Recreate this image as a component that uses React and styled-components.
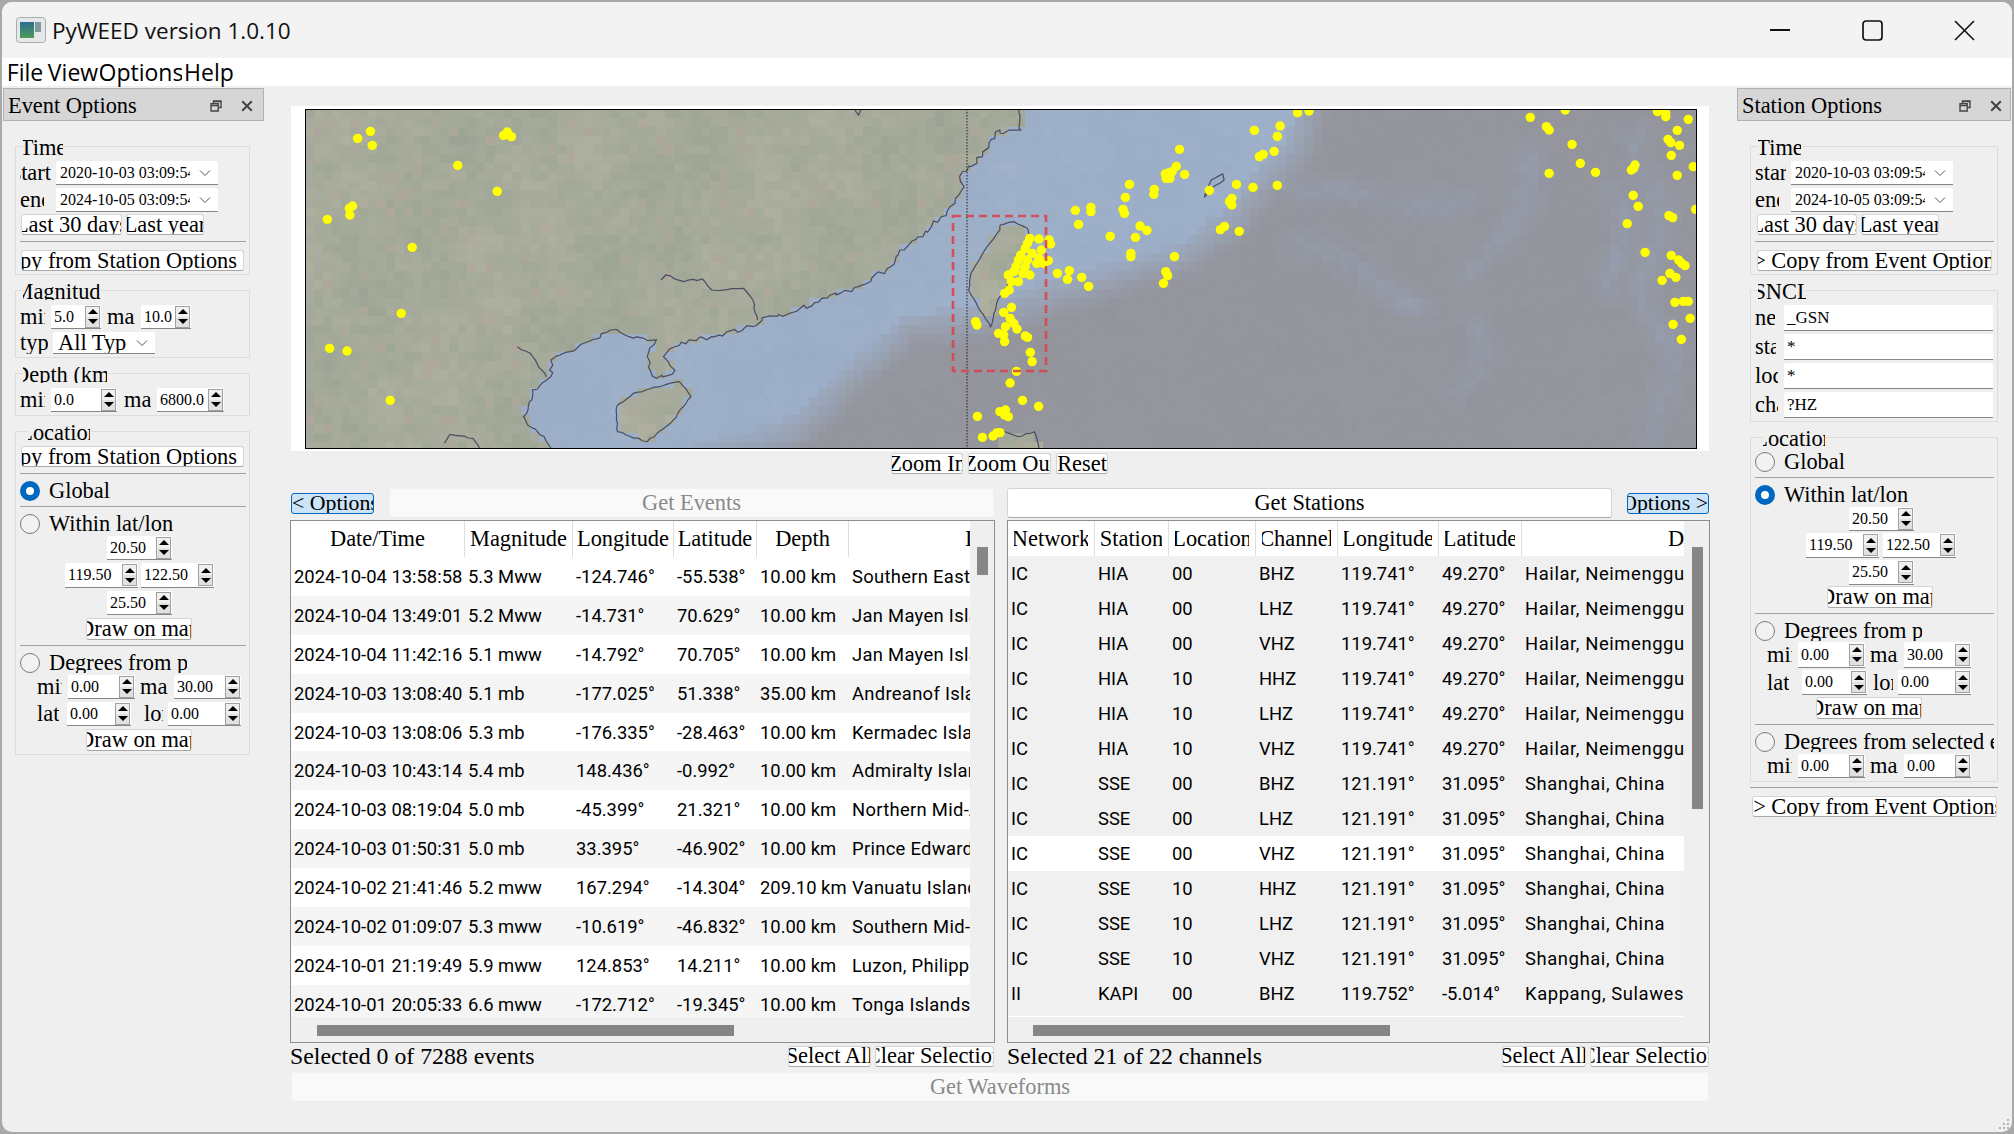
import React from "react";
import styled, { createGlobalStyle } from "styled-components";

const GlobalStyle = createGlobalStyle`
  html, body { margin: 0; padding: 0; background: #a9a9a9; }
  * { box-sizing: border-box; }
`;

const serif = `"Liberation Serif", serif`;
const sans = `"Open Sans", sans-serif`;

/* ---------- map drawing data ---------- */

const MAP_W = 1392;
const MAP_H = 340;
const z7 = ([x, y]) => [x / 2.178 - 25, y / 3 - 9];
const z8 = ([x, y]) => [x / 2.178 + 695, y / 3 - 9];

const mainCoast = [
  ...[[45, 0], [45, 90], [20, 90], [0, 100]].map(z8),
  ...[[1568, 90], [1530, 170], [1480, 230], [1490, 260], [1470, 310], [1440, 350], [1400, 410], [1350, 450], [1330, 500], [1260, 560], [1180, 595], [1110, 640], [1060, 650], [1030, 680], [940, 710], [860, 740], [835, 770], [860, 810], [820, 835], [800, 770], [820, 720], [760, 710], [720, 690], [650, 740], [590, 780], [590, 830], [550, 870], [530, 950], [590, 1045]].map(z7),
];
const hainan = [[733, 920], [770, 880], [870, 845], [895, 890], [850, 970], [800, 1025], [735, 995], [733, 920]].map(z7);
const taiwan = [
  ...[[0, 375], [30, 365], [60, 385], [65, 420], [40, 480], [15, 560], [-5, 600]].map(z8),
  ...[[1548, 680], [1520, 620], [1500, 570], [1505, 520], [1540, 440], [1568, 390]].map(z7),
  z8([0, 375]),
];
const luzon = [[-10, 985], [40, 1010], [75, 995], [85, 1045], [-10, 1045]].map(z8);
const okinawa = [[445, 292], [450, 270], [460, 240], [485, 222], [488, 240], [460, 265], [445, 292]].map(z8);
const rivers = [
  [[830, 540], [840, 525], [880, 545], [920, 537], [940, 570], [1010, 565], [1030, 600], [1040, 660]].map(z7),
  [[517, 740], [545, 760], [580, 830]].map(z7),
  [[358, 1030], [370, 1003], [420, 1015], [435, 1045]].map(z7),
  [[1252, 30], [1260, 45], [1265, 30]].map(z7),
];

const z7Dots = [[197, 94], [169, 115], [201, 136], [487, 106], [495, 96], [504, 110], [387, 196], [473, 274], [158, 318], [151, 325], [152, 345], [103, 358], [288, 442], [264, 640], [108, 745], [146, 753], [240, 901], [1515, 665], [1518, 675], [1565, 700], [1519, 949], [1568, 935], [1530, 1012], [1553, 1008], [1562, 998]];
const z8Dots = [[648, 38], [673, 33], [610, 78], [554, 91], [604, 109], [597, 154], [573, 163], [565, 170], [391, 148], [384, 199], [402, 223], [360, 222], [368, 218], [375, 215], [362, 235], [370, 235], [282, 253], [515, 253], [551, 262], [604, 256], [336, 268], [335, 283], [273, 292], [456, 271], [505, 295], [500, 305], [505, 315], [198, 322], [198, 335], [268, 328], [271, 340], [164, 331], [171, 373], [240, 409], [295, 412], [305, 378], [320, 391], [489, 379], [480, 389], [521, 394], [285, 460], [285, 470], [380, 470], [151, 512], [125, 520], [147, 538], [178, 532], [193, 559], [361, 515], [365, 527], [356, 550], [1155, 52], [1231, 30], [1190, 80], [1196, 90], [1246, 133], [1264, 190], [1297, 217], [1196, 220], [1432, 35], [1450, 40], [1450, 50], [1499, 58], [1475, 91], [1455, 118], [1461, 128], [1480, 136], [1462, 166], [1510, 200], [1383, 195], [1380, 205], [1375, 210], [1475, 226], [1379, 286], [1390, 319], [1515, 328], [1457, 347], [1465, 353], [1366, 371], [1405, 457], [1462, 466], [1478, 480], [1485, 490], [1492, 497], [1459, 520], [1472, 532], [1442, 541], [1470, 607], [1488, 604], [1499, 604], [1503, 655], [1466, 673], [1484, 718],
  [65, 415], [85, 417], [107, 420], [110, 432], [60, 430], [55, 445], [90, 450], [45, 465], [70, 460], [40, 480], [60, 480], [85, 475], [105, 482], [35, 500], [55, 500], [80, 490], [95, 490], [30, 515], [50, 520], [65, 525], [18, 525], [40, 545], [25, 545], [20, 570], [10, 580], [25, 622], [8, 637], [22, 655], [30, 670], [37, 687], [12, 680], [55, 708], [60, 712], [8, 705], [10, 725], [66, 757], [70, 785], [36, 814], [22, 849], [49, 901], [84, 919], [12, 930], [10, 945], [18, 950], [0, 998]];
const dots = [...z7Dots.map(z7), ...z8Dots.map(z8)];

const shelfEdge = [
  ...[[880, 1045], [1100, 960], [1350, 650], [1500, 620]].map(z7),
  ...[[110, 540], [390, 430], [480, 340], [620, 120], [650, 0]].map(z8),
];
const landPoly = [...mainCoast, [0, MAP_H], [0, 0]];
const blueStreaks = [
  [[640, 300], [1000, 290]], [[640, 430], [930, 600]], [[1000, 850], [1040, 680]],
  [[1450, 1040], [1400, 100]], [[1350, 540], [1330, 240]], [[1050, 500], [1180, 200]],
].map((s) => s.map(z8));

let seed = 17;
const rand = () => {
  seed = (seed * 16807) % 2147483647;
  return seed / 2147483647;
};

const inside = (p, poly) => {
  let hit = false;
  for (let i = 0, j = poly.length - 1; i < poly.length; j = i++) {
    const [xi, yi] = poly[i];
    const [xj, yj] = poly[j];
    if (yi > p[1] !== yj > p[1] && p[0] < ((xj - xi) * (p[1] - yi)) / (yj - yi) + xi) hit = !hit;
  }
  return hit;
};

const segDist = (p, a, b) => {
  const dx = b[0] - a[0];
  const dy = b[1] - a[1];
  const t = Math.max(0, Math.min(1, ((p[0] - a[0]) * dx + (p[1] - a[1]) * dy) / (dx * dx + dy * dy)));
  return Math.hypot(p[0] - a[0] - t * dx, p[1] - a[1] - t * dy);
};

const mix = (a, b, t) => a.map((v, i) => v + (b[i] - v) * t);

// slow wobble, so that neighbouring tiles look alike
const wave = (x, y) =>
  0.5 + 0.22 * Math.sin(x / 37 + y / 61) + 0.16 * Math.sin(x / 13 - y / 29) + 0.12 * Math.sin(y / 11 + x / 71);

const buildCells = () => {
  const cells = [];
  const deepPoly = [...shelfEdge, [MAP_W, 0], [MAP_W, MAP_H]];
  for (let y = 0; y < MAP_H; y += 9) {
    for (let x = 0; x < MAP_W; x += 9) {
      const p = [x + 4.5, y + 4.5];
      const n = wave(x, y) * 0.55 + rand() * 0.45;
      let col;
      if (inside(p, landPoly) || inside(p, hainan) || inside(p, taiwan) || inside(p, luzon)) {
        col = mix([155, 164, 148], [176, 176, 160], n);
        if (rand() > 0.96) col = mix(col, [178, 166, 156], 0.6);
      } else {
        let deep = 0;
        if (inside(p, deepPoly)) {
          let edge = Infinity;
          for (let i = 0; i < shelfEdge.length - 1; i++) edge = Math.min(edge, segDist(p, shelfEdge[i], shelfEdge[i + 1]));
          deep = Math.min(1, (edge + n * 14) / 46);
        }
        const wob = [p[0] + 12 * Math.sin(p[1] / 23), p[1] + 8 * Math.sin(p[0] / 31)];
        const near = Math.min(...blueStreaks.map(([a, b]) => segDist(wob, a, b)));
        const blue = Math.max(0, 1 - near / 24) * (0.15 + n * 0.45);
        const sea = mix([154, 172, 199], [160, 177, 201], n);
        const grey = mix(mix([146, 147, 155], [150, 150, 158], n), [148, 164, 188], blue);
        col = mix(sea, grey, deep);
      }
      cells.push({ x, y, fill: `rgb(${col.map(Math.round).join(",")})` });
    }
  }
  return cells;
};
const cells = buildCells();

// roughen a polyline so that it reads like a real coast
const jag = (pts, amp = 2.4) => {
  const out = [];
  pts.forEach((a, i) => {
    const b = pts[i + 1];
    out.push(a);
    if (!b) return;
    const steps = Math.floor(Math.hypot(b[0] - a[0], b[1] - a[1]) / 4);
    for (let s = 1; s < steps; s++) {
      out.push([
        a[0] + ((b[0] - a[0]) * s) / steps + (rand() - 0.5) * amp * 2,
        a[1] + ((b[1] - a[1]) * s) / steps + (rand() - 0.5) * amp * 2,
      ]);
    }
  });
  return out.map((p) => p.map((v) => v.toFixed(1)).join(",")).join(" ");
};

const coastLines = [
  jag(mainCoast), jag(hainan, 0.8), jag(taiwan, 0.5), jag(luzon.slice(0, 4), 0.8), jag(okinawa, 0.4),
  ...rivers.map((r) => jag(r, 1)),
];

/* ---------- table data ---------- */

const events = [
  ["2024-10-04 13:58:58", "5.3 Mww", "-124.746°", "-55.538°", "10.00 km", "Southern East Pacific Rise"],
  ["2024-10-04 13:49:01", "5.2 Mww", "-14.731°", "70.629°", "10.00 km", "Jan Mayen Island region"],
  ["2024-10-04 11:42:16", "5.1 mww", "-14.792°", "70.705°", "10.00 km", "Jan Mayen Island region"],
  ["2024-10-03 13:08:40", "5.1 mb", "-177.025°", "51.338°", "35.00 km", "Andreanof Islands, Aleutian"],
  ["2024-10-03 13:08:06", "5.3 mb", "-176.335°", "-28.463°", "10.00 km", "Kermadec Islands region"],
  ["2024-10-03 10:43:14", "5.4 mb", "148.436°", "-0.992°", "10.00 km", "Admiralty Islands region"],
  ["2024-10-03 08:19:04", "5.0 mb", "-45.399°", "21.321°", "10.00 km", "Northern Mid-Atlantic Ridge"],
  ["2024-10-03 01:50:31", "5.0 mb", "33.395°", "-46.902°", "10.00 km", "Prince Edward Islands"],
  ["2024-10-02 21:41:46", "5.2 mww", "167.294°", "-14.304°", "209.10 km", "Vanuatu Islands"],
  ["2024-10-02 01:09:07", "5.3 mww", "-10.619°", "-46.832°", "10.00 km", "Southern Mid-Atlantic Ridge"],
  ["2024-10-01 21:19:49", "5.9 mww", "124.853°", "14.211°", "10.00 km", "Luzon, Philippines"],
  ["2024-10-01 20:05:33", "6.6 mww", "-172.712°", "-19.345°", "10.00 km", "Tonga Islands"],
];

const hailar = ["119.741°", "49.270°", "Hailar, Neimenggu Province"];
const shanghai = ["121.191°", "31.095°", "Shanghai, China"];
const stations = [
  ["IC", "HIA", "00", "BHZ", ...hailar],
  ["IC", "HIA", "00", "LHZ", ...hailar],
  ["IC", "HIA", "00", "VHZ", ...hailar],
  ["IC", "HIA", "10", "HHZ", ...hailar],
  ["IC", "HIA", "10", "LHZ", ...hailar],
  ["IC", "HIA", "10", "VHZ", ...hailar],
  ["IC", "SSE", "00", "BHZ", ...shanghai],
  ["IC", "SSE", "00", "LHZ", ...shanghai],
  ["IC", "SSE", "00", "VHZ", ...shanghai],
  ["IC", "SSE", "10", "HHZ", ...shanghai],
  ["IC", "SSE", "10", "LHZ", ...shanghai],
  ["IC", "SSE", "10", "VHZ", ...shanghai],
  ["II", "KAPI", "00", "BHZ", "119.752°", "-5.014°", "Kappang, Sulawesi, Indonesia"],
];

const eventCols = "174px 108px 101px 83px 92px 280px";
const stationCols = "87px 74px 87px 82px 101px 83px 280px";

/* ---------- window chrome ---------- */

const Window = styled.div`
  position: relative;
  width: 2010px;
  height: 1130px;
  margin: 2px 2px 0;
  background: #efefef;
  border-radius: 10px;
  overflow: hidden;
  display: flex;
  flex-direction: column;
`;

const TitleBar = styled.header`
  height: 56px;
  flex: none;
  display: flex;
  align-items: center;
  padding: 0 2px 0 14px;
  background: #f3f3f3;
  font: 22.5px ${sans};
  color: #111;
`;

const TitleText = styled.span`
  margin-left: 6px;
  flex: 1;
`;

const WinControl = styled.button`
  width: 92px;
  height: 56px;
  padding: 0;
  border: 0;
  background: none;
  display: flex;
  align-items: center;
  justify-content: center;
`;

const MenuBar = styled.nav`
  height: 28px;
  flex: none;
  background: #fff;
  display: flex;
  align-items: center;
  padding-left: 2px;
  font: 23px ${sans};
  color: #000;
`;

const MenuItem = styled.span`
  width: ${(p) => p.$w}px;
  display: flex;
  justify-content: center;
  overflow: hidden;
  white-space: nowrap;
`;

const Main = styled.main`
  flex: 1;
  display: flex;
  min-height: 0;
`;

/* ---------- docks ---------- */

const Dock = styled.aside`
  flex: none;
  width: ${(p) => p.$w}px;
  margin-left: ${(p) => p.$left}px;
  padding-top: 2px;
  font: 22.4px/22px ${serif};
  color: #000;
`;

const DockTitle = styled.div`
  height: 33px;
  display: flex;
  align-items: center;
  background: #d6d6d6;
  border: 1px solid #b2b2b2;
  padding: 2px ${(p) => p.$right}px 0 4px;
  gap: 19px;
  white-space: nowrap;
`;

const DockName = styled.span`
  flex: 1;
`;

const DockBody = styled.div`
  padding: 25px 0 0 ${(p) => p.$pad}px;
  display: flex;
  flex-direction: column;
  gap: 15px;
`;

const Group = styled.section`
  position: relative;
  width: ${(p) => p.$w}px;
  border: 1px solid #dcdcdc;
  padding: 14px 4px 3px;
`;

const GroupTitle = styled.span`
  position: absolute;
  top: -7px;
  left: ${(p) => p.$left || 7}px;
  width: ${(p) => p.$w}px;
  height: 16px;
  background: #efefef;
  display: flex;
  justify-content: center;
  align-items: flex-start;
  line-height: 15px;
  overflow: hidden;
  white-space: nowrap;
`;

const Row = styled.div`
  display: flex;
  align-items: center;
  margin-top: ${(p) => p.$top || 0}px;
  padding-left: ${(p) => p.$left || 0}px;
`;

const Label = styled.span`
  flex: none;
  width: ${(p) => p.$w}px;
  margin-left: ${(p) => p.$left || 0}px;
  margin-right: ${(p) => p.$gap ?? 5}px;
  display: flex;
  justify-content: ${(p) => (p.$end ? "flex-end" : "flex-start")};
  overflow: hidden;
  white-space: nowrap;
`;

const Rule = styled.hr`
  height: 1px;
  width: ${(p) => p.$w || 226}px;
  margin: ${(p) => p.$top}px 0 ${(p) => p.$bottom}px ${(p) => p.$left || 0}px;
  border: 0;
  background: #a0a0a0;
`;

const Btn = styled.button`
  flex: none;
  width: ${(p) => p.$w}px;
  height: ${(p) => p.$h || 21}px;
  margin-left: ${(p) => p.$left || 0}px;
  padding: 0 ${(p) => p.$right || 0}px 0 0;
  display: flex;
  align-items: center;
  justify-content: ${(p) => p.$align || "center"};
  overflow: hidden;
  white-space: nowrap;
  font: 22.4px ${serif};
  color: #000;
  background: #fff;
  border: 1px solid #d4d4d4;
  border-bottom-color: #a8a8a8;
  border-radius: 3px;
`;

const ToggleBtn = styled(Btn)`
  background: #cce4f7;
  border: 1px solid #0067c0;
  font-size: 21.8px;
`;

const BigBtn = styled(Btn)`
  height: 30px;
  background: ${(p) => (p.disabled ? "#f9f9f9" : "#fff")};
  color: ${(p) => (p.disabled ? "#8a8a8a" : "#000")};
  border-color: ${(p) => (p.disabled ? "#f1f1f1" : "#d4d4d4")};
  border-bottom-color: ${(p) => (p.disabled ? "#ebebeb" : "#a8a8a8")};
`;

const Field = styled.div`
  flex: none;
  width: ${(p) => p.$w}px;
  height: ${(p) => p.$h || 24}px;
  margin-right: ${(p) => p.$gap || 0}px;
  display: flex;
  align-items: center;
  background: #fff;
  border-bottom: 1px solid #868686;
  border-radius: 2px 2px 0 0;
  font-size: ${(p) => p.$size || 16}px;
  overflow: hidden;
  white-space: nowrap;
  padding-left: ${(p) => p.$pad ?? 4}px;
`;

const FieldText = styled.span`
  flex: 1;
  min-width: 0;
  overflow: hidden;
`;

const SpinStack = styled.span`
  flex: none;
  width: 15px;
  height: 22px;
  margin: 0 1px 0 2px;
  display: flex;
  flex-direction: column;
  background: #e6e6e6;
  border: 1px solid #a0a0a0;
`;

const SpinPart = styled.span`
  flex: 1;
  display: flex;
  align-items: center;
  justify-content: center;
  background: ${(p) => (p.$up ? "#f0f0f0" : "#e1e1e1")};
  &::before {
    content: "";
    border-left: 5px solid transparent;
    border-right: 5px solid transparent;
    ${(p) => (p.$up ? "border-bottom: 5px solid #000;" : "border-top: 5px solid #000;")}
  }
`;

const ChevronSvg = styled.svg`
  flex: none;
  margin: 0 7px 0 9px;
`;

const Chevron = () => (
  <ChevronSvg width="12" height="8" viewBox="0 0 12 8">
    <path d="M1 1.5 L6 6.5 L11 1.5" fill="none" stroke="#555" strokeWidth="1" />
  </ChevronSvg>
);

const Combo = ({ w, h, size, pad, children }) => (
  <Field $w={w} $h={h} $size={size} $pad={pad}>
    <FieldText>{children}</FieldText>
    <Chevron />
  </Field>
);

const Spin = ({ w, h, gap, children }) => (
  <Field $w={w} $h={h} $gap={gap} $pad={3}>
    <FieldText>{children}</FieldText>
    <SpinStack>
      <SpinPart $up />
      <SpinPart />
    </SpinStack>
  </Field>
);

const RadioRow = styled.label`
  display: flex;
  align-items: center;
  gap: 9px;
  height: 20px;
  overflow: hidden;
  white-space: nowrap;
  width: ${(p) => p.$w}px;
`;

const RadioDot = styled.span`
  flex: none;
  width: 20px;
  height: 20px;
  border-radius: 50%;
  border: ${(p) => (p.$on ? "6px solid #0067c0" : "1.5px solid #7a7a7a")};
  background: ${(p) => (p.$on ? "#fff" : "#f2f2f2")};
`;

const FloatIcon = () => (
  <svg width="12" height="12" viewBox="0 0 12 12">
    <path d="M3.5 3 V1 H11 V7.5 H9 M1 3.8 H8.2 V11 H1 Z M1 5.6 H8.2 M3.5 1.6 H11" fill="none" stroke="#444" strokeWidth="1.4" />
  </svg>
);

const CloseIcon = () => (
  <svg width="12" height="12" viewBox="0 0 12 12">
    <path d="M1.2 1.2 L10.8 10.8 M10.8 1.2 L1.2 10.8" stroke="#444" strokeWidth="2" />
  </svg>
);

const DockHeader = ({ right, children }) => (
  <DockTitle $right={right}>
    <DockName>{children}</DockName>
    <FloatIcon />
    <CloseIcon />
  </DockTitle>
);

/* ---------- centre column ---------- */

const Center = styled.div`
  flex: none;
  width: 1420px;
  margin-left: ${(p) => p.$left}px;
  padding-top: 20px;
  display: flex;
  flex-direction: column;
`;

const MapFrame = styled.div`
  margin-left: 1px;
  width: 1418px;
  height: 345px;
  padding: 3px 12px 2px 14px;
  background: #fff;
`;

const MapSvg = styled.svg`
  display: block;
  width: 1392px;
  height: 340px;
  outline: 1.5px solid #000;
  outline-offset: -1.5px;
`;

const ZoomBar = styled.div`
  display: flex;
  gap: 5px;
  margin-top: 2px;
  padding-left: 601px;
`;

const Panes = styled.div`
  display: flex;
  gap: 12px;
  margin-top: 14px;
`;

const Pane = styled.div`
  width: ${(p) => p.$w}px;
  flex: none;
`;

const PaneTop = styled.div`
  display: flex;
  align-items: center;
  gap: 15px;
  height: 30px;
  padding-left: ${(p) => p.$left || 0}px;
`;

const TableFrame = styled.div`
  margin-top: 2px;
  height: 523px;
  display: grid;
  grid-template-columns: 1fr ${(p) => p.$bar}px;
  grid-template-rows: 496px 25px;
  border: 1px solid #8b8d92;
  background: #efefef;
`;

const Viewport = styled.div`
  overflow: hidden;
  background: ${(p) => (p.$selected ? "#f0f0f0" : "#fff")};
  border-bottom: ${(p) => (p.$selected ? "1px solid #fff" : "0")};
`;

const TableRow = styled.div`
  display: grid;
  grid-template-columns: ${(p) => p.$cols};
  width: max-content;
  height: ${(p) => p.$h}px;
  align-items: center;
  background: ${(p) => p.$bg};
`;

const Head = styled(TableRow)`
  background: #fff;
  align-items: stretch;
`;

const HeadCell = styled.div`
  display: flex;
  align-items: center;
  justify-content: ${(p) => (p.$last ? "flex-start" : "center")};
  padding-left: ${(p) => p.$last || 0}px;
  border-right: ${(p) => (p.$last ? "0" : "1px solid #dedede")};
  font: 22.4px ${serif};
`;

const HeadText = styled.span`
  width: calc(100% - ${(p) => p.$inset * 2}px);
  display: flex;
  justify-content: center;
  overflow: hidden;
  white-space: nowrap;
`;

const Cell = styled.div`
  padding-left: 3px;
  overflow: hidden;
  white-space: nowrap;
  font: 18.4px Roboto, sans-serif;
  letter-spacing: ${(p) => p.$spacing || 0}px;
  color: #000;
`;

const VBar = styled.div`
  padding-top: ${(p) => p.$top}px;
  padding-left: ${(p) => p.$left}px;
`;

const VThumb = styled.div`
  width: 11px;
  height: ${(p) => p.$h}px;
  background: #868686;
`;

const HBar = styled.div`
  padding: 8px 0 0 ${(p) => p.$left}px;
`;

const HThumb = styled.div`
  width: ${(p) => p.$w}px;
  height: 11px;
  background: #868686;
`;

const Corner = styled.div``;

const StatusRow = styled.div`
  height: 25px;
  display: flex;
  align-items: center;
  gap: 4px;
  padding: 1px 1px 0 0;
`;

const StatusText = styled.span`
  flex: 1;
  white-space: nowrap;
  font: 23.8px ${serif};
`;

const WaveBar = styled.div`
  margin: 4px 0 0 1px;
`;

const Grip = styled.svg`
  position: absolute;
  right: 1px;
  bottom: 1px;
`;

const AppIcon = () => (
  <svg width="30" height="26" viewBox="0 0 30 26">
    <rect x="0.5" y="0.5" width="29" height="25" rx="3" fill="#e4e8e8" stroke="#a6adad" />
    <defs>
      <linearGradient id="appGrad" x1="0" y1="0" x2="0" y2="1">
        <stop offset="0" stopColor="#2c6e8f" />
        <stop offset="1" stopColor="#4f9a5a" />
      </linearGradient>
    </defs>
    <rect x="4" y="5" width="14" height="16" fill="url(#appGrad)" />
    <rect x="19" y="5" width="6" height="10" fill="#7f9a9a" />
  </svg>
);

const MapView = () => (
  <MapSvg viewBox={`0 0 ${MAP_W} ${MAP_H}`}>
    {cells.map((c) => (
      <rect key={`${c.x}-${c.y}`} x={c.x} y={c.y} width="9.3" height="9.3" fill={c.fill} />
    ))}
    {coastLines.map((pts) => (
      <polyline key={pts.slice(0, 24)} points={pts} fill="none" stroke="#4a4c60" strokeWidth="1.2" />
    ))}
    <line x1="662" y1="0" x2="662" y2={MAP_H} stroke="#222" strokeWidth="1" strokeDasharray="1.5 1.5" />
    {dots.map(([x, y], i) => (
      <circle key={i} cx={x} cy={y} r="4.7" fill="#ffff00" />
    ))}
    <rect x="648" y="107" width="93" height="155" fill="none" stroke="#d9444f" strokeOpacity="0.9" strokeWidth="2.6" strokeDasharray="8 5" />
  </MapSvg>
);

const LatLonBox = ({ left, shift, btnLeft, gaps, heights, midGap }) => (
  <>
    <Row $top={gaps[0]} $left={left + shift}>
      <Spin w={65} h={heights[0]}>{"20.50"}</Spin>
    </Row>
    <Row $top={gaps[1]} $left={left}>
      <Spin w={73} h={heights[1]} gap={midGap}>{"119.50"}</Spin>
      <Spin w={73} h={heights[1]}>{"122.50"}</Spin>
    </Row>
    <Row $top={gaps[2]} $left={left + shift}>
      <Spin w={65} h={heights[2]}>{"25.50"}</Spin>
    </Row>
    <Row $top={gaps[3]} $left={btnLeft}>
      <Btn $w={106} $h={22}>Draw on map</Btn>
    </Row>
  </>
);

const FromPoint = ({ left, btnLeft, gaps, heights, latSpin, latGap, lonLeft, lonLabel }) => (
  <>
    <Row $top={gaps[0]} $left={left}>
      <Label $w={25} $gap={6}>min</Label>
      <Spin w={67} h={heights[0]}>0.00</Spin>
      <Label $w={28} $gap={6} $left={5}>max</Label>
      <Spin w={67} h={heights[0]}>30.00</Spin>
    </Row>
    <Row $top={gaps[1]} $left={left}>
      <Label $w={22} $gap={latGap}>lat</Label>
      <Spin w={latSpin} h={heights[1]}>0.00</Spin>
      <Label $w={lonLabel} $gap={5} $left={lonLeft}>lon</Label>
      <Spin w={73} h={heights[1]}>0.00</Spin>
    </Row>
    <Row $top={gaps[2]} $left={btnLeft}>
      <Btn $w={106} $h={22}>Draw on map</Btn>
    </Row>
  </>
);

const App = () => (
  <>
    <GlobalStyle />
    <Window>
      <TitleBar>
        <AppIcon />
        <TitleText>PyWEED version 1.0.10</TitleText>
        <WinControl aria-label="minimize">
          <svg width="20" height="2"><rect width="20" height="2" fill="#111" /></svg>
        </WinControl>
        <WinControl aria-label="maximize">
          <svg width="21" height="21" viewBox="0 0 21 21">
            <rect x="1" y="1" width="19" height="19" rx="3" fill="none" stroke="#111" strokeWidth="1.7" />
          </svg>
        </WinControl>
        <WinControl aria-label="close">
          <svg width="21" height="21" viewBox="0 0 21 21">
            <path d="M1 1 L20 20 M20 1 L1 20" stroke="#111" strokeWidth="1.6" />
          </svg>
        </WinControl>
      </TitleBar>
      <MenuBar>
        <MenuItem $w={42}>File</MenuItem>
        <MenuItem $w={54}>View</MenuItem>
        <MenuItem $w={82}>Options</MenuItem>
        <MenuItem $w={54}>Help</MenuItem>
      </MenuBar>
      <Main>
        <Dock $w={261} $left={1}>
          <DockHeader right={10}>Event Options</DockHeader>
          <DockBody $pad={12}>
            <Group $w={235}>
              <GroupTitle $w={40}>Time</GroupTitle>
              <Row>
                <Label $w={31} $end>start</Label>
                <Combo w={162}>2020-10-03 03:09:54</Combo>
              </Row>
              <Row $top={3}>
                <Label $w={24} $gap={12}>end</Label>
                <Combo w={162}>2024-10-05 03:09:54</Combo>
              </Row>
              <Row $top={2} $left={1}>
                <Btn $w={101}>Last 30 days</Btn>
                <Btn $w={78} $left={4}>Last year</Btn>
              </Row>
              <Rule $top={6} $bottom={8} />
              <Row $left={1}>
                <Btn $w={223} $align="flex-end" $right={6}>Copy from Station Options</Btn>
              </Row>
            </Group>
            <Group $w={235}>
              <GroupTitle $w={78}>Magnitude</GroupTitle>
              <Row>
                <Label $w={25} $gap={6}>min</Label>
                <Spin w={50}>5.0</Spin>
                <Label $w={28} $gap={6} $left={6}>max</Label>
                <Spin w={50}>10.0</Spin>
              </Row>
              <Row $top={3}>
                <Label $w={28}>type</Label>
                <Combo w={102} h={22} size={22.4} pad={5}>All Types</Combo>
              </Row>
            </Group>
            <Group $w={235}>
              <GroupTitle $w={84}>Depth (km)</GroupTitle>
              <Row>
                <Label $w={25} $gap={6}>min</Label>
                <Spin w={66}>0.0</Spin>
                <Label $w={27} $gap={6} $left={7}>max</Label>
                <Spin w={67}>6800.0</Spin>
              </Row>
            </Group>
            <Group $w={235}>
              <GroupTitle $w={62} $left={12}>Location</GroupTitle>
              <Row $left={1}>
                <Btn $w={223} $align="flex-end" $right={6}>Copy from Station Options</Btn>
              </Row>
              <Rule $top={6} $bottom={7} />
              <RadioRow $w={226}><RadioDot $on />Global</RadioRow>
              <Rule $top={5} $bottom={7} />
              <RadioRow $w={226}><RadioDot />Within lat/lon</RadioRow>
              <LatLonBox left={45} shift={42} btnLeft={66} midGap={3} gaps={[2, 3, 3, 3]} heights={[24, 25, 24]} />
              <Rule $top={5} $bottom={7} />
              <RadioRow $w={167}><RadioDot />Degrees from point</RadioRow>
              <FromPoint left={17} btnLeft={66} gaps={[2, 3, 3]} heights={[24, 24]} latSpin={64} latGap={8} lonLeft={13} lonLabel={19} />
            </Group>
          </DockBody>
        </Dock>
        <Center $left={26}>
          <MapFrame>
            <MapView />
          </MapFrame>
          <ZoomBar>
            <Btn $w={72}>Zoom In</Btn>
            <Btn $w={83}>Zoom Out</Btn>
            <Btn $w={52}>Reset</Btn>
          </ZoomBar>
          <Panes>
            <Pane $w={705}>
              <PaneTop $left={1}>
                <ToggleBtn $w={83} $align="flex-start">&lt; Options</ToggleBtn>
                <BigBtn $w={605} disabled>Get Events</BigBtn>
              </PaneTop>
              <TableFrame $bar={24}>
                <Viewport>
                  <Head $cols={eventCols} $h={36}>
                    {["Date/Time", "Magnitude", "Longitude", "Latitude", "Depth"].map((h) => (
                      <HeadCell key={h}><HeadText $inset={3}>{h}</HeadText></HeadCell>
                    ))}
                    <HeadCell $last={116}>I</HeadCell>
                  </Head>
                  {events.map((row, i) => (
                    <TableRow key={row[0]} $cols={eventCols} $h={38.9} $bg={i % 2 ? "#f5f5f5" : "#fff"}>
                      {row.map((c, j) => (
                        <Cell key={j} $spacing={j === 5 ? 0.3 : 0}>{c}</Cell>
                      ))}
                    </TableRow>
                  ))}
                </Viewport>
                <VBar $top={26} $left={7}>
                  <VThumb $h={28} />
                </VBar>
                <HBar $left={26}>
                  <HThumb $w={417} />
                </HBar>
                <Corner />
              </TableFrame>
              <StatusRow>
                <StatusText>Selected 0 of 7288 events</StatusText>
                <Btn $w={83}>Select All</Btn>
                <Btn $w={119}>Clear Selection</Btn>
              </StatusRow>
            </Pane>
            <Pane $w={703}>
              <PaneTop>
                <BigBtn $w={605}>Get Stations</BigBtn>
                <ToggleBtn $w={82} $align="flex-end">Options &gt;</ToggleBtn>
              </PaneTop>
              <TableFrame $bar={25}>
                <Viewport $selected>
                  <Head $cols={stationCols} $h={35}>
                    {["Network", "Station", "Location", "Channel", "Longitude", "Latitude"].map((h) => (
                      <HeadCell key={h}><HeadText $inset={6}>{h}</HeadText></HeadCell>
                    ))}
                    <HeadCell $last={146}>Description</HeadCell>
                  </Head>
                  {stations.map((row, i) => (
                    <TableRow key={i} $cols={stationCols} $h={35} $bg={i === 8 ? "#fff" : "#f0f0f0"}>
                      {row.map((c, j) => (
                        <Cell key={j} $spacing={j === 6 ? 0.6 : 0}>{c}</Cell>
                      ))}
                    </TableRow>
                  ))}
                </Viewport>
                <VBar $top={26} $left={8}>
                  <VThumb $h={262} />
                </VBar>
                <HBar $left={25}>
                  <HThumb $w={357} />
                </HBar>
                <Corner />
              </TableFrame>
              <StatusRow>
                <StatusText>Selected 21 of 22 channels</StatusText>
                <Btn $w={84}>Select All</Btn>
                <Btn $w={119}>Clear Selection</Btn>
              </StatusRow>
            </Pane>
          </Panes>
          <WaveBar>
            <BigBtn $w={1418} disabled>Get Waveforms</BigBtn>
          </WaveBar>
        </Center>
        <Dock $w={274} $left={27}>
          <DockHeader right={8}>Station Options</DockHeader>
          <DockBody $pad={13}>
            <Group $w={248}>
              <GroupTitle $w={43}>Time</GroupTitle>
              <Row>
                <Label $w={31}>start</Label>
                <Combo w={162}>2020-10-03 03:09:54</Combo>
              </Row>
              <Row $top={3}>
                <Label $w={24} $gap={12}>end</Label>
                <Combo w={162}>2024-10-05 03:09:54</Combo>
              </Row>
              <Row $top={2} $left={2}>
                <Btn $w={100}>Last 30 days</Btn>
                <Btn $w={78} $left={4}>Last year</Btn>
              </Row>
              <Rule $w={239} $top={6} $bottom={8} />
              <Row $left={2}>
                <Btn $w={235}>-&gt; Copy from Event Options</Btn>
              </Row>
            </Group>
            <Group $w={248}>
              <GroupTitle $w={48}>SNCL</GroupTitle>
              {[["network", "_GSN", 20, 9], ["station", "*", 21, 8], ["location", "*", 23, 6], ["channel", "?HZ", 23, 6]].map(([label, value, w, gap], i) => (
                <Row key={label} $top={i ? 3 : 0}>
                  <Label $w={w} $gap={gap}>{label}</Label>
                  <Field $w={209} $h={26} $size={17} $pad={3}>{value}</Field>
                </Row>
              ))}
            </Group>
            <Group $w={248}>
              <GroupTitle $w={62} $left={12}>Location</GroupTitle>
              <RadioRow $w={239}><RadioDot />Global</RadioRow>
              <Rule $w={239} $top={5} $bottom={7} />
              <RadioRow $w={239}><RadioDot $on />Within lat/lon</RadioRow>
              <LatLonBox left={51} shift={43} btnLeft={72} midGap={4} gaps={[2, 2, 2, 1]} heights={[24, 25, 25]} />
              <Rule $w={239} $top={5} $bottom={7} />
              <RadioRow $w={167}><RadioDot />Degrees from point</RadioRow>
              <FromPoint left={12} btnLeft={61} gaps={[1, 2, 2]} heights={[26, 25]} latSpin={65} latGap={13} lonLeft={6} lonLabel={20} />
              <Rule $w={239} $top={5} $bottom={7} />
              <RadioRow $w={239}><RadioDot />Degrees from selected events</RadioRow>
              <Row $top={2} $left={12}>
                <Label $w={25} $gap={6}>min</Label>
                <Spin w={67}>0.00</Spin>
                <Label $w={28} $gap={6} $left={5}>max</Label>
                <Spin w={67}>0.00</Spin>
              </Row>
            </Group>
          </DockBody>
          <Rule $w={248} $top={5} $bottom={8} $left={13} />
          <Btn $w={245} $left={15}>-&gt; Copy from Event Options</Btn>
        </Dock>
      </Main>
      <Grip width="14" height="14" viewBox="0 0 14 14">
        <path d="M10 2h2v2h-2zM6 6h2v2H6zM10 6h2v2h-2zM2 10h2v2H2zM6 10h2v2H6zM10 10h2v2h-2z" fill="#b5b5b5" />
      </Grip>
    </Window>
  </>
);

export default App;
